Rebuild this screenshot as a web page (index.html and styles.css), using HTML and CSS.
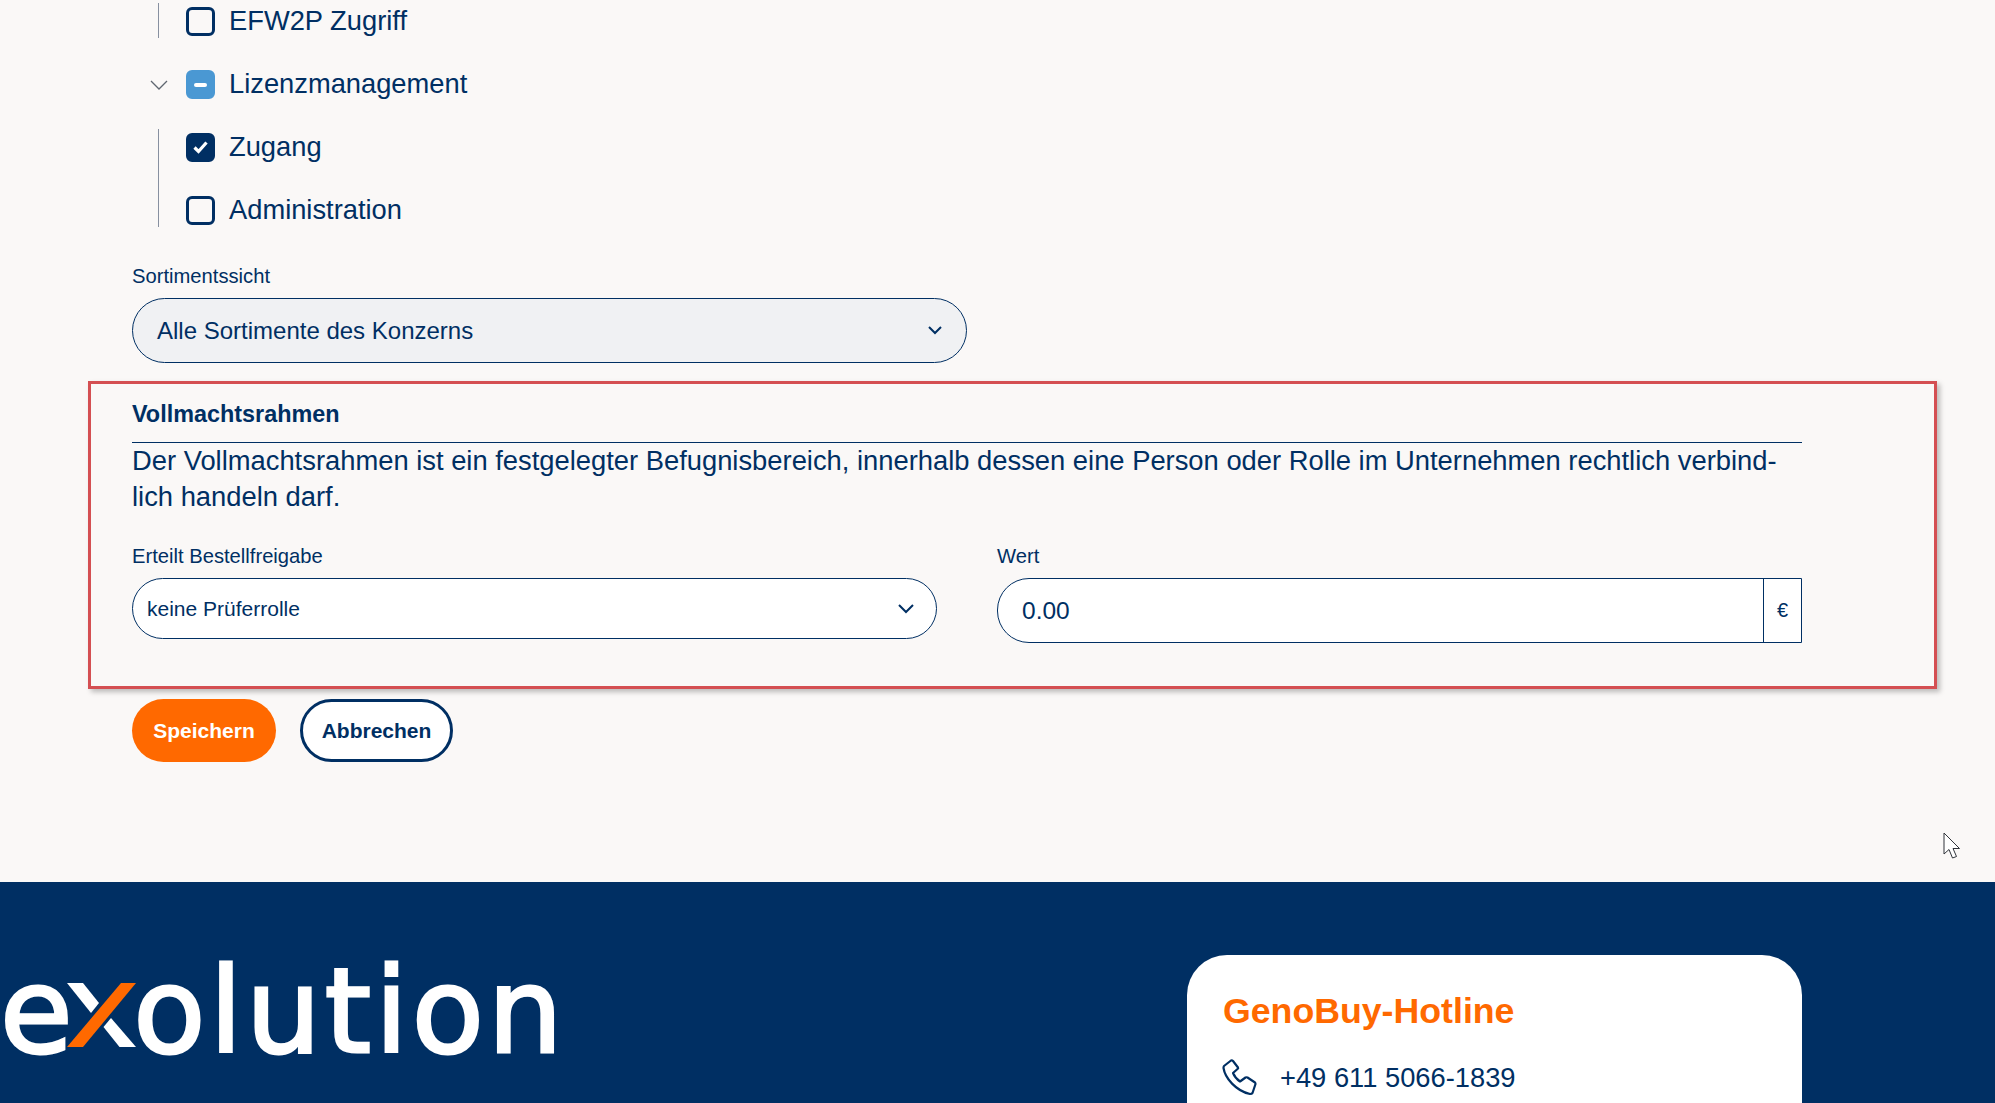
FILE: index.html
```html
<!DOCTYPE html>
<html lang="de">
<head>
    <meta charset="UTF-8">
    <title>Benutzer bearbeiten</title>
    <link rel="stylesheet" href="styles.css">
</head>
<body>

<main class="content">
    <div class="tree">
        <div class="tree-children">
            <label class="tree-row">
                <span class="check"></span>
                <span>EFW2P Zugriff</span>
            </label>
        </div>
        <label class="tree-row tree-parent">
            <svg class="tree-toggle" viewBox="0 0 18 10" width="18" height="10">
                <path d="M1 1l8 8 8-8" fill="none" stroke="#5f6670" stroke-width="1.3"/>
            </svg>
            <span class="check check-partial"><span class="dash"></span></span>
            <span>Lizenzmanagement</span>
        </label>
        <div class="tree-children">
            <label class="tree-row">
                <span class="check check-on">
                    <svg viewBox="0 0 15 13" width="15" height="13">
                        <path d="M1.500 6.500l4 4 8-9" fill="none" stroke="#fff" stroke-width="3.200"/>
                    </svg>
                </span>
                <span>Zugang</span>
            </label>
            <label class="tree-row">
                <span class="check"></span>
                <span>Administration</span>
            </label>
        </div>
    </div>

    <div class="field field-sort">
        <div class="field-label">Sortimentssicht</div>
        <div class="select select-grey">
            <span>Alle Sortimente des Konzerns</span>
            <svg class="chevron" viewBox="0 0 14 9" width="14" height="9">
                <path d="M1 1l6 6 6-6" fill="none" stroke="#002f63" stroke-width="2"/>
            </svg>
        </div>
    </div>

    <section class="authority">
        <h2 class="authority-title">Vollmachtsrahmen</h2>
        <p class="authority-text">Der Vollmachtsrahmen ist ein festgelegter Befugnisbereich, innerhalb dessen eine Person oder Rolle im Unternehmen rechtlich verbind-<br>lich handeln darf.</p>
        <div class="authority-fields">
            <div class="field">
                <div class="field-label">Erteilt Bestellfreigabe</div>
                <div class="select select-white">
                    <span>keine Prüferrolle</span>
                    <svg class="chevron" viewBox="0 0 16 10" width="16" height="10">
                        <path d="M1 1l7 7 7-7" fill="none" stroke="#002f63" stroke-width="2"/>
                    </svg>
                </div>
            </div>
            <div class="field">
                <div class="field-label">Wert</div>
                <div class="amount">
                    <span class="amount-value">0.00</span>
                    <span class="amount-unit">€</span>
                </div>
            </div>
        </div>
    </section>

    <div class="actions">
        <button class="btn btn-save">Speichern</button>
        <button class="btn btn-cancel">Abbrechen</button>
    </div>

    <svg class="cursor" viewBox="0 0 18 28" width="18" height="28">
        <path d="M1 1v21l5-4.500 3.500 8.500 4-1.500-3.500-8h6.500z" fill="#fff" stroke="#30343a" stroke-width="1"/>
    </svg>
</main>

<footer class="footer">
    <div class="logo"><span class="logo-e">e</span><span class="logo-x">x<svg viewBox="0 0 70 64" width="70" height="64">
        <path d="M0 0h16l16 20-8 10z" fill="#fff"/>
        <path d="M44 35l25 29H52.500L36.500 44z" fill="#fff"/>
        <path d="M54 0h15L16 64H0z" fill="#ff6900"/>
    </svg></span>olution</div>
    <div class="hotline">
        <h3 class="hotline-title">GenoBuy-Hotline</h3>
        <div class="hotline-row">
            <svg viewBox="0 0 36 38" width="36" height="38">
                <path d="M2 8l7-5.500q1-.5 2 .5l5 6.500q.5 1-.5 1.500L11 15q2 5 7 8.500l5.500-4q1-.5 2 0l7.500 5q.5.5.5 1.500l-3 9q-.5 1-2.500 1C14 33 3 20 1.500 10q0-1 .5-2z" fill="none" stroke="#002f63" stroke-width="2.200" stroke-linejoin="round"/>
            </svg>
            <span class="hotline-number">+49 611 5066-1839</span>
        </div>
    </div>
</footer>

</body>
</html>
```

FILE: styles.css
```css
* {
    box-sizing: border-box;
}

html, body {
    height: 1103px;
    overflow: hidden;
}

body {
    font-family: "Liberation Sans", Arial, sans-serif;
    margin: 0;
    padding: 0;
    background-color: #faf8f7;
    color: #002f63;
}

.content {
    position: relative;
    height: 882px;
    padding: 3px 0 0 132px;
}

/* rights tree */
.tree {
    display: flex;
    flex-direction: column;
    gap: 28px;
}

.tree-children {
    display: flex;
    flex-direction: column;
    gap: 28px;
    margin-left: 26px;
    padding-left: 27px;
    border-left: 1px solid #8790a0;
}

.tree-row {
    display: flex;
    align-items: center;
    gap: 14px;
    height: 35px;
    font-size: 27.3px;
}

.tree-parent {
    margin-left: 18px;
}

.tree-toggle {
    margin: 3px 4px 0 0;
}

.check {
    display: flex;
    align-items: center;
    justify-content: center;
    width: 29px;
    height: 29px;
    margin-top: 2px;
    border: 3px solid #002f63;
    border-radius: 6px;
}

.check-on {
    background-color: #002f63;
}

.check-partial {
    background-color: #4a98d3;
    border-color: #4a98d3;
}

.dash {
    width: 13px;
    height: 4px;
    border-radius: 2px;
    background-color: #fff;
}

/* form fields */
.field {
    flex: 1;
}

.field-sort {
    width: 835px;
    margin-top: 38px;
}

.field-label {
    height: 22px;
    font-size: 20.2px;
    line-height: 22px;
    margin-bottom: 11px;
}

.select {
    display: flex;
    align-items: center;
    justify-content: space-between;
    border: 1px solid #002f63;
}

.select-grey {
    height: 65px;
    padding: 0 24px;
    border-radius: 33px;
    background-color: #f0f1f3;
    font-size: 24px;
}

.select-white {
    height: 61px;
    padding: 0 22px 0 14px;
    border-radius: 31px;
    background-color: #fff;
    font-size: 21px;
}

/* red marked section */
.authority {
    width: 1849px;
    height: 308px;
    margin: 18px 0 0 -44px;
    padding: 17px 132px 0 41px;
    border: 3px solid #d44f52;
    box-shadow: 3px 3px 5px rgba(0, 0, 0, 0.25);
}

.authority-title {
    margin: 0;
    padding-bottom: 15px;
    border-bottom: 1px solid #002f63;
    font-size: 23.4px;
    line-height: 26px;
    font-weight: bold;
}

.authority-text {
    margin: 0;
    font-size: 27.35px;
    line-height: 36px;
}

.authority-fields {
    display: flex;
    gap: 60px;
    margin-top: 30px;
}

.amount {
    display: flex;
    height: 65px;
    border: 1px solid #002f63;
    border-radius: 32px 0 0 32px;
    background-color: #fff;
    font-size: 24.5px;
}

.amount-value {
    flex: 1;
    align-self: center;
    padding-left: 24px;
}

.amount-unit {
    display: flex;
    align-items: center;
    justify-content: center;
    width: 38px;
    border-left: 1px solid #002f63;
    font-size: 20px;
}

.actions {
    display: flex;
    gap: 24px;
    margin-top: 10px;
}

.btn {
    height: 63px;
    border-radius: 32px;
    font-family: inherit;
    font-size: 21px;
    font-weight: bold;
}

.btn-save {
    width: 144px;
    border: none;
    background-color: #ff6900;
    color: #fff;
}

.btn-cancel {
    width: 153px;
    border: 3px solid #002f63;
    background-color: #fff;
    color: #002f63;
}

.cursor {
    position: absolute;
    top: 832px;
    left: 1943px;
}

/* footer */
.footer {
    display: flex;
    justify-content: space-between;
    height: 221px;
    padding: 73px 193px 0 0;
    background-color: #002f63;
}

.logo {
    height: 120px;
    margin-top: -4px;
    font-family: "DejaVu Sans", sans-serif;
    font-size: 118px;
    line-height: 120px;
    letter-spacing: 3.9px;
    -webkit-text-stroke: 3px #fff;
    color: #fff;
}

.logo-e {
    letter-spacing: -5.6px;
}

.logo-x {
    position: relative;
    display: inline-block;
    letter-spacing: -3.5px;
    color: transparent;
    -webkit-text-stroke: 0;
}

.logo-x svg {
    position: absolute;
    left: 0;
    bottom: 24px;
}

.hotline {
    width: 615px;
    height: 160px;
    padding: 35px 36px;
    border-radius: 40px 40px 0 0;
    background-color: #fff;
}

.hotline-title {
    margin: 0;
    color: #ff6900;
    font-size: 35.7px;
    line-height: 42px;
    font-weight: bold;
}

.hotline-row {
    display: flex;
    align-items: center;
    gap: 22px;
    margin: 26px 0 0 -1px;
    font-size: 27.3px;
}

.hotline-number {
    padding-top: 1px;
}
```
